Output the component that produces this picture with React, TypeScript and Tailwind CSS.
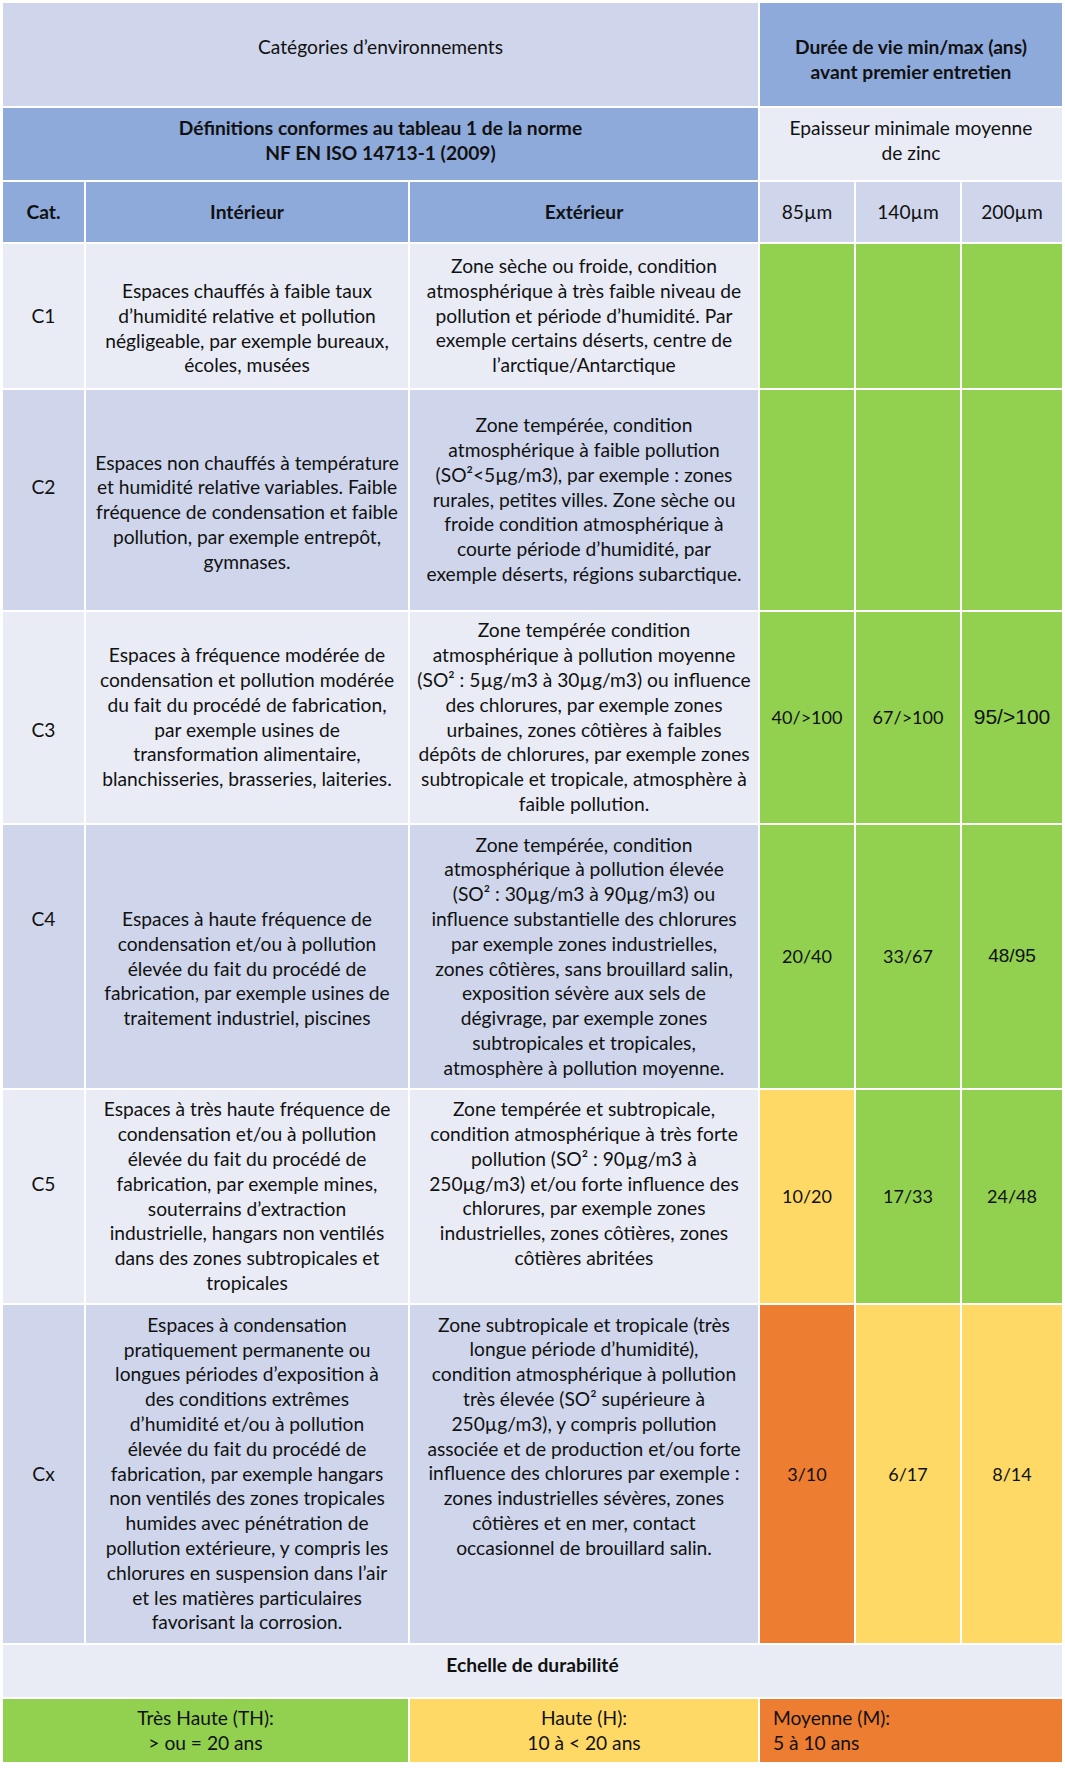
import React from 'react';

const GREEN = 'bg-[#92D050]';
const YELLOW = 'bg-[#FFD966]';
const ORANGE = 'bg-[#ED7D31]';

interface Val {
    text: string;
    bg: string;
    font?: string;
}

interface Row {
    cat: string;
    bg: string;
    catShift: string;
    intShift: string;
    extShift: string;
    interior: string[];
    exterior: string[];
    vals: Val[];
}

const ARIAL_BIG = "font-['Liberation_Sans',Arial,sans-serif] text-[21px]";
const ARIAL = "font-['Liberation_Sans',Arial,sans-serif] text-[19px]";

const rows: Row[] = [
    {
        cat: 'C1',
        bg: 'bg-[#E9EBF5]',
        catShift: '',
        intShift: 'pt-[25px]',
        extShift: '',
        interior: [
            'Espaces chauffés à faible taux',
            'd’humidité relative et pollution',
            'négligeable, par exemple bureaux,',
            'écoles, musées',
        ],
        exterior: [
            'Zone sèche ou froide, condition',
            'atmosphérique à très faible niveau de',
            'pollution et période d’humidité. Par',
            'exemple certains déserts, centre de',
            'l’arctique/Antarctique',
        ],
        vals: [
            { text: '', bg: GREEN },
            { text: '', bg: GREEN },
            { text: '', bg: GREEN },
        ],
    },
    {
        cat: 'C2',
        bg: 'bg-[#CFD5EA]',
        catShift: 'pb-[25px]',
        intShift: 'pt-[25px]',
        extShift: '',
        interior: [
            'Espaces non chauffés à température',
            'et humidité relative variables. Faible',
            'fréquence de condensation et faible',
            'pollution, par exemple entrepôt,',
            'gymnases.',
        ],
        exterior: [
            'Zone tempérée, condition',
            'atmosphérique à faible pollution',
            '(SO²<5µg/m3), par exemple : zones',
            'rurales, petites villes. Zone sèche ou',
            'froide condition atmosphérique à',
            'courte période d’humidité, par',
            'exemple déserts, régions subarctique.',
        ],
        vals: [
            { text: '', bg: GREEN },
            { text: '', bg: GREEN },
            { text: '', bg: GREEN },
        ],
    },
    {
        cat: 'C3',
        bg: 'bg-[#E9EBF5]',
        catShift: 'pt-[25px]',
        intShift: '',
        extShift: '',
        interior: [
            'Espaces à fréquence modérée de',
            'condensation et pollution modérée',
            'du fait du procédé de fabrication,',
            'par exemple usines de',
            'transformation alimentaire,',
            'blanchisseries, brasseries, laiteries.',
        ],
        exterior: [
            'Zone tempérée condition',
            'atmosphérique à pollution moyenne',
            '(SO² : 5µg/m3 à 30µg/m3) ou influence',
            'des chlorures, par exemple zones',
            'urbaines, zones côtières à faibles',
            'dépôts de chlorures, par exemple zones',
            'subtropicale et tropicale, atmosphère à',
            'faible pollution.',
        ],
        vals: [
            { text: '40/>100', bg: GREEN },
            { text: '67/>100', bg: GREEN },
            { text: '95/>100', bg: GREEN, font: ARIAL_BIG },
        ],
    },
    {
        cat: 'C4',
        bg: 'bg-[#CFD5EA]',
        catShift: 'pb-[75px]',
        intShift: 'pt-[25px]',
        extShift: '',
        interior: [
            'Espaces à haute fréquence de',
            'condensation et/ou à pollution',
            'élevée du fait du procédé de',
            'fabrication, par exemple usines de',
            'traitement industriel, piscines',
        ],
        exterior: [
            'Zone tempérée, condition',
            'atmosphérique à pollution élevée',
            '(SO² : 30µg/m3 à 90µg/m3) ou',
            'influence substantielle des chlorures',
            'par exemple zones industrielles,',
            'zones côtières, sans brouillard salin,',
            'exposition sévère aux sels de',
            'dégivrage, par exemple zones',
            'subtropicales et tropicales,',
            'atmosphère à pollution moyenne.',
        ],
        vals: [
            { text: '20/40', bg: GREEN },
            { text: '33/67', bg: GREEN },
            { text: '48/95', bg: GREEN, font: ARIAL },
        ],
    },
    {
        cat: 'C5',
        bg: 'bg-[#E9EBF5]',
        catShift: 'pb-[25px]',
        intShift: '',
        extShift: 'pb-[25px]',
        interior: [
            'Espaces à très haute fréquence de',
            'condensation et/ou à pollution',
            'élevée du fait du procédé de',
            'fabrication, par exemple mines,',
            'souterrains d’extraction',
            'industrielle, hangars non ventilés',
            'dans des zones subtropicales et',
            'tropicales',
        ],
        exterior: [
            'Zone tempérée et subtropicale,',
            'condition atmosphérique à très forte',
            'pollution (SO² : 90µg/m3 à',
            '250µg/m3) et/ou forte influence des',
            'chlorures, par exemple zones',
            'industrielles, zones côtières, zones',
            'côtières abritées',
        ],
        vals: [
            { text: '10/20', bg: YELLOW },
            { text: '17/33', bg: GREEN },
            { text: '24/48', bg: GREEN },
        ],
    },
    {
        cat: 'Cx',
        bg: 'bg-[#CFD5EA]',
        catShift: '',
        intShift: '',
        extShift: 'pb-[75px]',
        interior: [
            'Espaces à condensation',
            'pratiquement permanente ou',
            'longues périodes d’exposition à',
            'des conditions extrêmes',
            'd’humidité et/ou à pollution',
            'élevée du fait du procédé de',
            'fabrication, par exemple hangars',
            'non ventilés des zones tropicales',
            'humides avec pénétration de',
            'pollution extérieure, y compris les',
            'chlorures en suspension dans l’air',
            'et les matières particulaires',
            'favorisant la corrosion.',
        ],
        exterior: [
            'Zone subtropicale et tropicale (très',
            'longue période d’humidité),',
            'condition atmosphérique à pollution',
            'très élevée (SO² supérieure à',
            '250µg/m3), y compris pollution',
            'associée et de production et/ou forte',
            'influence des chlorures par exemple :',
            'zones industrielles sévères, zones',
            'côtières et en mer, contact',
            'occasionnel de brouillard salin.',
        ],
        vals: [
            { text: '3/10', bg: ORANGE },
            { text: '6/17', bg: YELLOW },
            { text: '8/14', bg: YELLOW },
        ],
    },
];

function Lines({ lines }: { lines: string[] }) {
    return (
        <>
            {lines.map((l, i) => (
                <span key={i} className="block whitespace-nowrap">
                    {l}
                </span>
            ))}
        </>
    );
}

export default function App() {
    return (
        <div className="bg-white w-[1065px] min-h-[1768px] font-['Lato',sans-serif] text-[19.2px] leading-[24.8px] text-[#111]">
            <div className="grid grid-cols-[81px_322px_348px_94px_104px_100px] grid-rows-[103px_72px_60px_144px_220px_211px_263px_213px_338px_52px_63px] gap-[2px] p-[3px] text-center">
                {/* header */}
                <div className="col-span-3 bg-[#CFD5EA] flex flex-col items-center pt-[32px]">
                    Catégories d’environnements
                </div>
                <div className="col-span-3 bg-[#8EAADB] flex flex-col items-center pt-[32px] font-bold">
                    <Lines lines={['Durée de vie min/max (ans)', 'avant premier entretien']} />
                </div>

                <div className="col-span-3 bg-[#8EAADB] flex flex-col justify-center pb-[6px] font-bold">
                    <Lines lines={['Définitions conformes au tableau 1 de la norme', 'NF EN ISO 14713-1 (2009)']} />
                </div>
                <div className="col-span-3 bg-[#E9EBF5] flex flex-col justify-center pb-[6px]">
                    <Lines lines={['Epaisseur minimale moyenne', 'de zinc']} />
                </div>

                <div className="bg-[#8EAADB] flex items-center justify-center font-bold">Cat.</div>
                <div className="bg-[#8EAADB] flex items-center justify-center font-bold">Intérieur</div>
                <div className="bg-[#8EAADB] flex items-center justify-center font-bold">Extérieur</div>
                <div className="bg-[#CFD5EA] flex items-center justify-center">85µm</div>
                <div className="bg-[#CFD5EA] flex items-center justify-center">140µm</div>
                <div className="bg-[#CFD5EA] flex items-center justify-center">200µm</div>

                {/* body rows */}
                {rows.map((r) => (
                    <React.Fragment key={r.cat}>
                        <div className={`${r.bg} ${r.catShift} flex items-center justify-center`}>{r.cat}</div>
                        <div className={`${r.bg} ${r.intShift} flex flex-col justify-center`}>
                            <Lines lines={r.interior} />
                        </div>
                        <div className={`${r.bg} ${r.extShift} flex flex-col justify-center`}>
                            <Lines lines={r.exterior} />
                        </div>
                        {r.vals.map((v, i) => (
                            <div
                                key={i}
                                className={`${v.bg} flex items-center justify-center ${v.font ?? 'text-[18px]'}`}
                            >
                                {v.text}
                            </div>
                        ))}
                    </React.Fragment>
                ))}

                {/* scale */}
                <div className="col-span-6 bg-[#E9EBF5] pt-[8px] font-bold">Echelle de durabilité</div>

                <div className="col-span-2 bg-[#92D050] flex flex-col justify-center">
                    <Lines lines={['Très Haute (TH):', '> ou = 20 ans']} />
                </div>
                <div className="bg-[#FFD966] flex flex-col justify-center">
                    <Lines lines={['Haute (H):', '10 à < 20 ans']} />
                </div>
                <div className="col-span-3 bg-[#ED7D31] flex flex-col justify-center text-left pl-[13px]">
                    <Lines lines={['Moyenne (M):', '5 à 10 ans']} />
                </div>
            </div>
        </div>
    );
}
